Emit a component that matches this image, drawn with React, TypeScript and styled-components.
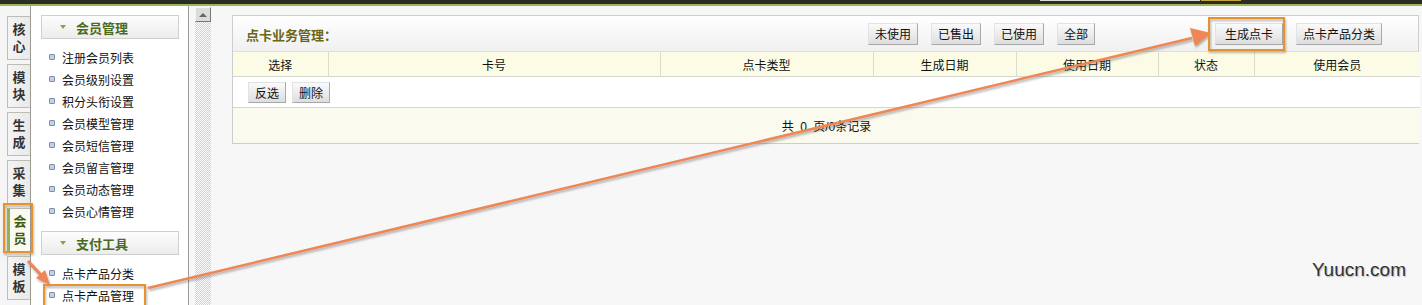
import styled, { createGlobalStyle } from "styled-components";

const GlobalStyle = createGlobalStyle`
  html, body {
    margin: 0;
    padding: 0;
    background: #f7f7f7;
    font-family: "Liberation Sans", "Noto Sans CJK SC", sans-serif;
    font-size: 12px;
    color: #222;
  }
`;

const tabs = ["核心", "模块", "生成", "采集", "会员", "模板"];
const memberMenu = [
  "注册会员列表",
  "会员级别设置",
  "积分头衔设置",
  "会员模型管理",
  "会员短信管理",
  "会员留言管理",
  "会员动态管理",
  "会员心情管理",
];
const payMenu = ["点卡产品分类", "点卡产品管理"];
const columns = [
  { label: "选择", width: 95 },
  { label: "卡号", width: 332 },
  { label: "点卡类型", width: 213 },
  { label: "生成日期", width: 143 },
  { label: "使用日期", width: 142 },
  { label: "状态", width: 96 },
  { label: "使用会员", width: 166 },
];

const App = () => {
  return (
    <Page>
      <GlobalStyle />
      <TopBar>
        <SearchBox />
        <SearchGo />
      </TopBar>
      <Body>
        <TabCol>
          {tabs.map((t) => (
            <Tab key={t} $active={t === "会员"}>
              {t}
            </Tab>
          ))}
        </TabCol>
        <Sidebar>
          <MenuHeader>
            <Caret />
            会员管理
          </MenuHeader>
          <MenuList>
            {memberMenu.map((m) => (
              <MenuItem key={m}>{m}</MenuItem>
            ))}
          </MenuList>
          <MenuHeader>
            <Caret />
            支付工具
          </MenuHeader>
          <MenuList>
            {payMenu.map((m) => (
              <MenuItem key={m}>{m}</MenuItem>
            ))}
          </MenuList>
        </Sidebar>
        <ScrollStrip>
          <ScrollUp>
            <UpArrow />
          </ScrollUp>
        </ScrollStrip>
        <Main>
          <Panel>
            <PanelHead>
              <PanelTitle>点卡业务管理：</PanelTitle>
              <BtnGroup>
                <Btn>未使用</Btn>
                <Btn>已售出</Btn>
                <Btn>已使用</Btn>
                <Btn>全部</Btn>
              </BtnGroup>
              <BtnGroup $far>
                <Btn $wide>生成点卡</Btn>
                <Btn>点卡产品分类</Btn>
              </BtnGroup>
            </PanelHead>
            <Table>
              <colgroup>
                {columns.map((c) => (
                  <col key={c.label} style={{ width: c.width }} />
                ))}
              </colgroup>
              <thead>
                <tr>
                  {columns.map((c) => (
                    <Th key={c.label}>{c.label}</Th>
                  ))}
                </tr>
              </thead>
              <tbody>
                <tr>
                  <ActionCell colSpan={columns.length}>
                    <SmallBtn>反选</SmallBtn>
                    <SmallBtn>删除</SmallBtn>
                  </ActionCell>
                </tr>
                <tr>
                  <FootCell colSpan={columns.length}>共 0 页/0条记录</FootCell>
                </tr>
              </tbody>
            </Table>
          </Panel>
        </Main>
      </Body>

      {/* annotation overlay drawn on top of the screenshot */}
      <Overlay width="1422" height="305" viewBox="0 0 1422 305">
        <defs>
          <filter id="sh" x="-5%" y="-50%" width="110%" height="200%">
            <feDropShadow dx="1" dy="2" stdDeviation="1.2" floodColor="#555" floodOpacity="0.45" />
          </filter>
        </defs>
        <g filter="url(#sh)">
          <line x1="148" y1="288" x2="1192" y2="38" stroke="#ef8654" strokeWidth="2.5" />
          <polygon points="1211,33 1190,28 1195,46" fill="#ef8654" />
          <line x1="28" y1="261" x2="42" y2="276" stroke="#ef8654" strokeWidth="3" />
          <polygon points="50,285 36,278 45,270" fill="#ef8654" />
          <rect x="4" y="204" width="28" height="48" fill="none" stroke="#e8922e" strokeWidth="2" />
          <rect x="1209" y="18" width="75" height="32" fill="none" stroke="#e8922e" strokeWidth="2" />
          <rect x="44" y="285" width="101" height="24" fill="none" stroke="#e8922e" strokeWidth="2" />
        </g>
      </Overlay>
      <Watermark>Yuucn.com</Watermark>
    </Page>
  );
};

const Page = styled.div`
  position: relative;
  width: 1422px;
  height: 305px;
  overflow: hidden;
  display: flex;
  flex-direction: column;
`;

const TopBar = styled.div`
  position: relative;
  height: 4px;
  background: #2c2c26;
  border-bottom: 2px solid #9ab55a;
  flex-shrink: 0;
`;

const SearchBox = styled.div`
  position: absolute;
  left: 1040px;
  top: 0;
  width: 160px;
  height: 1px;
  background: #ddd;
`;

const SearchGo = styled.div`
  position: absolute;
  left: 1201px;
  top: 0;
  width: 40px;
  height: 1px;
  background: #c9a840;
`;

const Body = styled.div`
  flex: 1;
  display: flex;
  min-height: 0;
`;

const TabCol = styled.div`
  width: 31px;
  flex-shrink: 0;
  border-right: 1px solid #9a9a92;
  background: #f5f5f5;
  padding: 10px 0 0 7px;
  box-sizing: border-box;
  display: flex;
  flex-direction: column;
  gap: 4px;
`;

const Tab = styled.div<{ $active?: boolean }>`
  width: 23px;
  height: 44px;
  box-sizing: border-box;
  border: 1px solid #bdbdb6;
  border-right: none;
  border-left: ${(p) => (p.$active ? "3px solid #8fb35a" : "1px solid #bdbdb6")};
  background: ${(p) => (p.$active ? "#fafaf2" : "linear-gradient(90deg, #f4f4f4, #e9e9e9)")};
  color: ${(p) => (p.$active ? "#3d5a12" : "#333")};
  font-weight: bold;
  font-size: 13px;
  line-height: 17px;
  display: flex;
  align-items: center;
  justify-content: center;
  text-align: center;
  padding: 0 3px;
  word-break: break-all;
`;

const Sidebar = styled.div`
  width: 158px;
  flex-shrink: 0;
  background: #fff;
  border-right: 1px solid #9a9a92;
  padding: 9px 9px 0 10px;
  box-sizing: border-box;
`;

const MenuHeader = styled.div`
  height: 24px;
  box-sizing: border-box;
  border: 1px solid #cfcfcf;
  background: linear-gradient(#fdfdfd, #ececec);
  color: #4a6a1c;
  font-weight: bold;
  font-size: 13px;
  display: flex;
  align-items: center;
  padding-left: 18px;
  gap: 10px;
`;

const Caret = styled.span`
  width: 0;
  height: 0;
  border-left: 3px solid transparent;
  border-right: 3px solid transparent;
  border-top: 4px solid #7ea650;
`;

const MenuList = styled.ul`
  list-style: none;
  margin: 7px 0 9px;
  padding: 0;
`;

const MenuItem = styled.li`
  height: 22px;
  display: flex;
  align-items: center;
  gap: 7px;
  padding-left: 8px;
  color: #111;
  font-size: 12px;

  &::before {
    content: "";
    width: 4px;
    height: 4px;
    border: 1px solid #7d8fae;
    background: #c4d0e4;
    border-radius: 1px;
  }
`;

const ScrollStrip = styled.div`
  width: 23px;
  flex-shrink: 0;
  padding: 1px 1px 0 6px;
  box-sizing: border-box;
  background-color: #fff;
  background-image: repeating-conic-gradient(#d2d2d2 0 25%, #fbfbfb 0 50%);
  background-size: 2px 2px;
  background-origin: content-box;
  background-clip: content-box;
`;

const ScrollUp = styled.div`
  width: 16px;
  height: 15px;
  box-sizing: border-box;
  border: 1px solid;
  border-color: #f4f4f4 #777 #777 #f4f4f4;
  background: #dcdcdc;
  display: flex;
  align-items: center;
  justify-content: center;
`;

const UpArrow = styled.span`
  width: 0;
  height: 0;
  border-left: 4px solid transparent;
  border-right: 4px solid transparent;
  border-bottom: 4px solid #666;
`;

const Main = styled.div`
  flex: 1;
  background: #f7f7f7;
  padding: 9px 3px 0 20px;
`;

const Panel = styled.div`
  width: 1187px;
  border: 1px solid #cdcdcd;
  box-sizing: border-box;
  background: #fff;
`;

const PanelHead = styled.div`
  height: 35px;
  display: flex;
  align-items: center;
  padding: 0 0 0 13px;
  background: linear-gradient(#ffffff, #f0f0f0);
  border-bottom: 1px solid #e0e0d8;
`;

const PanelTitle = styled.div`
  font-weight: bold;
  font-size: 13px;
  color: #6b6516;
  margin-right: auto;
  margin-top: 2px;
`;

const BtnGroup = styled.div<{ $far?: boolean }>`
  display: flex;
  gap: 13px;
  margin-left: ${(p) => (p.$far ? "120px" : "0")};
  margin-right: ${(p) => (p.$far ? "36px" : "0")};
`;

const Btn = styled.button<{ $wide?: boolean }>`
  height: 22px;
  padding: ${(p) => (p.$wide ? "0 9px" : "0 6px")};
  border: 1px solid;
  border-color: #e2e2e2 #a8a8a8 #a8a8a8 #e2e2e2;
  background: linear-gradient(#fafafa, #dedede);
  font-family: inherit;
  font-size: 12px;
  color: #111;
`;

const Table = styled.table`
  width: 100%;
  border-collapse: collapse;
  table-layout: fixed;
`;

const Th = styled.th`
  height: 24px;
  padding: 0;
  background: #fcfce6;
  border-right: 1px solid #dcdcc8;
  border-bottom: 1px solid #d6d6d0;
  font-weight: normal;
  font-size: 12px;
  color: #111;

  &:last-child {
    border-right: none;
  }
`;

const ActionCell = styled.td`
  height: 30px;
  padding: 0 0 0 15px;
  background: #fff;
  border-bottom: 1px solid #d6d6d0;
`;

const SmallBtn = styled(Btn)`
  height: 21px;
  padding: 0 6px;
  margin-right: 6px;
  vertical-align: middle;
`;

const FootCell = styled.td`
  height: 35px;
  padding: 0;
  text-align: center;
  background: #fafaee;
  color: #111;
  font-size: 12px;
  word-spacing: 3px;
`;

const Overlay = styled.svg`
  position: absolute;
  left: 0;
  top: 0;
  pointer-events: none;
`;

const Watermark = styled.div`
  position: absolute;
  left: 1312px;
  top: 259px;
  font-family: "Liberation Sans", Arial, sans-serif;
  font-size: 19px;
  color: #333;
  text-shadow: 1px 1px 1px #bbb;
`;

export default App;
